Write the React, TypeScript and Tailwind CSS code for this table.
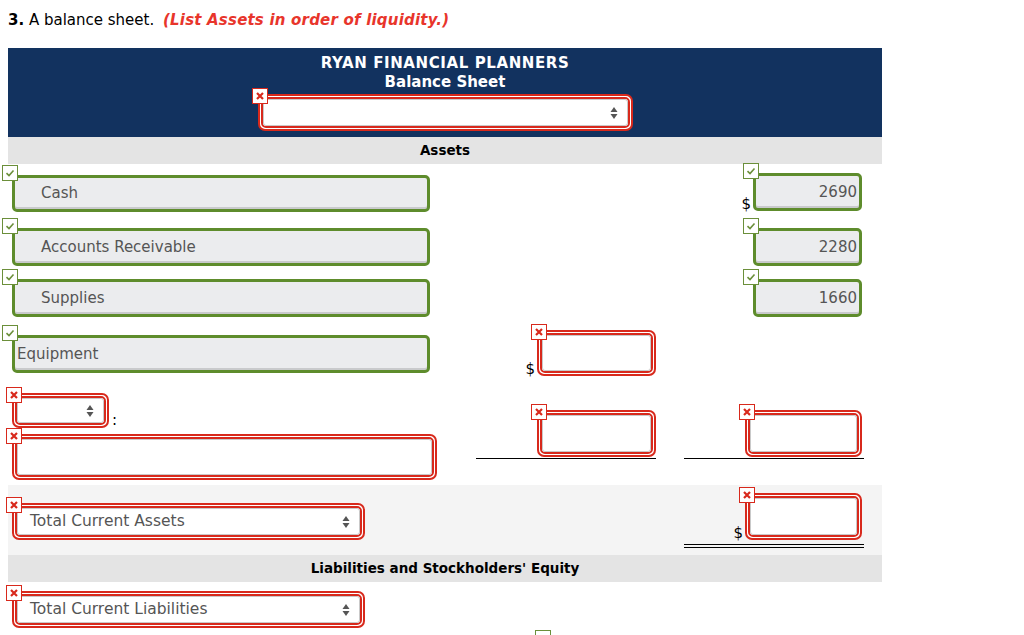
import React from "react";

const RED = "border-[#d8291c]";

function RedX() {
  return (
    <span className="absolute -left-[6px] -top-[6px] z-10 flex h-4 w-4 items-center justify-center border border-[#d8291c] bg-white">
      <svg width="8" height="8" viewBox="0 0 8 8">
        <path d="M1 1L7 7M7 1L1 7" stroke="#d8291c" strokeWidth="2.2" />
      </svg>
    </span>
  );
}

function GreenCheck() {
  return (
    <span className="absolute -left-[10px] -top-[10px] z-10 flex h-4 w-4 items-center justify-center border border-[#6b8f3a] bg-white">
      <svg width="10" height="8" viewBox="0 0 10 8">
        <path d="M1.5 4.2L4 6.5L8.5 1.5" stroke="#6b8f3a" strokeWidth="1.6" fill="none" />
      </svg>
    </span>
  );
}

function Arrows() {
  return (
    <svg width="8" height="14" viewBox="0 0 8 14" className="shrink-0">
      <path d="M4 1L7.5 6H0.5Z" fill="#555" />
      <path d="M4 13L7.5 8H0.5Z" fill="#555" />
    </svg>
  );
}

// red double-bordered field (wrong answer)
function RedField({
  className,
  select,
  children,
}: {
  className: string;
  select?: boolean;
  children?: React.ReactNode;
}) {
  return (
    <div className={`relative ${className}`}>
      <RedX />
      <div className={`h-full rounded-[7px] border-2 ${RED} bg-white p-px`}>
        <div className={`h-full rounded-[5px] border-2 ${RED}`}>
          <div className="flex h-full items-center rounded-[3px] border border-[#c9c9c9] bg-white pl-3 pr-[9px] text-[15.5px] text-[#555]">
            <span className="flex-1">{children}</span>
            {select && <Arrows />}
          </div>
        </div>
      </div>
    </div>
  );
}

function GreenField({
  className,
  children,
  right,
  pad = "pl-[26px]",
}: {
  className: string;
  children: React.ReactNode;
  right?: boolean;
  pad?: string;
}) {
  return (
    <div className={`relative ${className}`}>
      <GreenCheck />
      <div
        className={`flex h-full items-center rounded-[5px] border-[3px] border-[#5e8c2c] bg-[#ebecee] text-[15px] text-[#555] shadow-[inset_0_-2px_0_#c9cacc] ${
          right ? "justify-end pr-[2px]" : pad
        }`}
      >
        {children}
      </div>
    </div>
  );
}

function Dollar() {
  return <span className="mr-[2px] text-[15px] leading-[14px] text-black">$</span>;
}

export default function App() {
  return (
    <div className="h-[635px] w-[1024px] overflow-hidden bg-white font-['DejaVu_Sans',Verdana,sans-serif] text-black">
      {/* question title */}
      <div className="h-[48px] pl-2 pt-[11px] text-[15px] leading-[18px]">
        <span className="font-bold">3.</span> A balance sheet.{" "}
        <span className="ml-1 font-bold italic tracking-[0.2px] text-[#e8352b]">
          (List Assets in order of liquidity.)
        </span>
      </div>

      {/* header */}
      <div className="ml-2 flex h-[89px] w-[874px] flex-col items-center bg-[#12325f] pt-[6px] text-[15px] font-bold leading-[19px] text-white">
        <div className="tracking-[0.6px]">RYAN FINANCIAL PLANNERS</div>
        <div>Balance Sheet</div>
        <RedField className="mt-[2px] h-[37px] w-[375px]" select />
      </div>

      <div className="ml-2 h-[27px] w-[874px] bg-[#e4e4e4] text-center text-[13.5px] font-bold leading-[27px]">
        Assets
      </div>

      {/* Cash */}
      <div className="flex h-[55px]">
        <div className="w-[476px] pl-3 pt-[11px]">
          <GreenField className="h-[37px] w-[418px]">Cash</GreenField>
        </div>
        <div className="w-[180px]" />
        <div className="ml-[28px] flex w-[180px] items-start justify-end pr-[2px] pt-[9px]">
          <div className="flex h-[38px] items-end">
            <Dollar />
            <GreenField className="h-[38px] w-[109px]" right>
              2690
            </GreenField>
          </div>
        </div>
      </div>

      {/* Accounts Receivable */}
      <div className="flex h-[51px]">
        <div className="w-[476px] pl-3 pt-[9px]">
          <GreenField className="h-[38px] w-[418px]">Accounts Receivable</GreenField>
        </div>
        <div className="w-[180px]" />
        <div className="ml-[28px] flex w-[180px] justify-end pr-[2px] pt-[9px]">
          <GreenField className="h-[38px] w-[109px]" right>
            2280
          </GreenField>
        </div>
      </div>

      {/* Supplies */}
      <div className="flex h-[56px]">
        <div className="w-[476px] pl-3 pt-[9px]">
          <GreenField className="h-[38px] w-[418px]">Supplies</GreenField>
        </div>
        <div className="w-[180px]" />
        <div className="ml-[28px] flex w-[180px] justify-end pr-[2px] pt-[9px]">
          <GreenField className="h-[38px] w-[109px]" right>
            1660
          </GreenField>
        </div>
      </div>

      {/* Equipment */}
      <div className="flex h-[61px]">
        <div className="w-[476px] pl-3 pt-[9px]">
          <GreenField className="h-[38px] w-[418px]" pad="pl-[2px]">
            Equipment
          </GreenField>
        </div>
        <div className="flex w-[180px] items-start justify-end pt-[4px]">
          <div className="flex h-[46px] items-end">
            <Dollar />
            <RedField className="h-[46px] w-[119px]" />
          </div>
        </div>
      </div>

      {/* less accumulated depreciation */}
      <div className="flex h-[98px]">
        <div className="w-[476px] pl-3 pt-[6px]">
          <div className="flex items-end">
            <RedField className="h-[35px] w-[97px]" select />
            <span className="ml-[3px] text-[15px] leading-[16px]">:</span>
          </div>
          <RedField className="mt-[6px] h-[46px] w-[425px]" />
        </div>
        <div className="w-[180px] pt-[23px]">
          <div className="flex justify-end border-b border-black pb-px">
            <RedField className="h-[47px] w-[119px]" />
          </div>
        </div>
        <div className="ml-[28px] w-[180px] pt-[23px]">
          <div className="flex justify-end border-b border-black pb-px pr-[2px]">
            <RedField className="h-[47px] w-[117px]" />
          </div>
        </div>
      </div>

      {/* total current assets */}
      <div className="ml-2 flex h-[70px] w-[874px] bg-[#f4f4f4]">
        <div className="w-[468px] pl-1 pt-[18px]">
          <RedField className="h-[37px] w-[353px]" select>
            Total Current Assets
          </RedField>
        </div>
        <div className="w-[180px]" />
        <div className="ml-[28px] w-[180px] pt-[8px]">
          <div className="flex items-end justify-end pr-[2px]">
            <Dollar />
            <RedField className="h-[47px] w-[117px]" />
          </div>
          <div className="mt-[4px] h-[4px] border-y border-black" />
        </div>
      </div>

      <div className="ml-2 h-[27px] w-[874px] bg-[#e4e4e4] text-center text-[13.5px] font-bold leading-[27px]">
        Liabilities and Stockholders' Equity
      </div>

      {/* total current liabilities */}
      <div className="flex h-[60px]">
        <div className="w-[476px] pl-3 pt-[9px]">
          <RedField className="h-[37px] w-[353px]" select>
            Total Current Liabilities
          </RedField>
        </div>
        <div className="w-[180px] pl-[59px] pt-[48px]">
          <div className="h-4 w-4 border border-[#6b8f3a] bg-white" />
        </div>
      </div>
    </div>
  );
}
